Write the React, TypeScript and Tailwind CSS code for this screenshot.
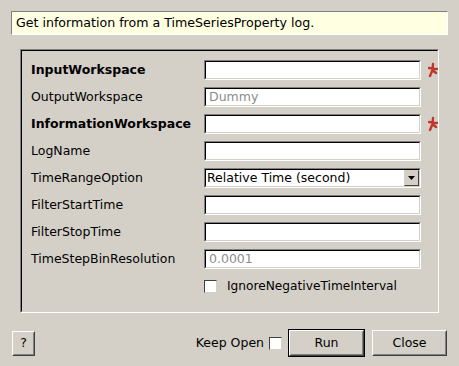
import React from 'react';

const font = "font-['DejaVu_Sans',sans-serif]";

const Sunken: React.FC<{ className?: string; children?: React.ReactNode }> = ({ className = '', children }) => (
    <div className={`shrink-0 border border-t-[#808080] border-l-[#808080] border-b-white border-r-white ${className}`}>
        <div className="h-full border border-t-black border-l-black border-b-[#d4d0c8] border-r-[#d4d0c8] bg-white flex items-center">
            {children}
        </div>
    </div>
);

const Asterisk = () => (
    <svg width="10" height="16" viewBox="0 0 10 16" className="ml-[7px] shrink-0">
        <path d="M1 6 L9 7 M5 2 L4.5 8 L2 14 M4.5 8 L8 11" stroke="#c0362c" strokeWidth="2.4" strokeLinecap="round" fill="none" />
    </svg>
);

const Button: React.FC<{ label: string; className?: string }> = ({ label, className = '' }) => (
    <div className={`border border-t-white border-l-white border-b-[#404040] border-r-[#404040] bg-[#d4d0c8] ${className}`}>
        <div className="h-full border border-t-[#d4d0c8] border-l-[#d4d0c8] border-b-[#808080] border-r-[#808080] flex items-center justify-center text-[12.5px] text-black">
            {label}
        </div>
    </div>
);

const Check = () => <div className="shrink-0 w-[13px] h-[13px] bg-white border border-t-[#404040] border-l-[#404040] border-b-[#d4d0c8] border-r-[#d4d0c8]" />;

type Row = { label: string; bold?: boolean; value?: string; required?: boolean; select?: boolean };

const rows: Row[] = [
    { label: 'InputWorkspace', bold: true, required: true },
    { label: 'OutputWorkspace', value: 'Dummy' },
    { label: 'InformationWorkspace', bold: true, required: true },
    { label: 'LogName' },
    { label: 'TimeRangeOption', select: true },
    { label: 'FilterStartTime' },
    { label: 'FilterStopTime' },
    { label: 'TimeStepBinResolution', value: '0.0001' },
];

export default function App() {
    return (
        <div className={`w-[459px] h-[366px] bg-[#d4d0c8] ${font} text-black pt-[11px] px-[11px] flex flex-col`}>
            <div className="h-[24px] bg-[#ffffe1] border border-t-[#808080] border-l-[#808080] border-b-white border-r-white pl-[4px] flex items-center text-[12.6px]">
                Get information from a TimeSeriesProperty log.
            </div>
            <div className="mt-[14px] ml-[9px] w-[419px] h-[264px] border border-t-[#808080] border-l-[#808080] border-b-white border-r-white">
                <div className="h-full border border-t-black border-l-black border-b-transparent border-r-transparent pt-[9px] pl-[9px] flex flex-col gap-[7px]">
                    {rows.map(r => (
                        <div key={r.label} className="flex items-center h-[20px]">
                            <div className={`w-[173px] shrink-0 text-[12.5px] ${r.bold ? 'font-bold' : ''} whitespace-nowrap`}>{r.label}</div>
                            {r.select ? (
                                <div className="shrink-0 w-[217px] h-[20px] border border-t-[#808080] border-l-[#808080] border-b-white border-r-white">
                                    <div className="h-full border border-t-black border-l-black border-b-[#d4d0c8] border-r-[#d4d0c8] bg-white flex items-center justify-between">
                                        <span className="text-[12.5px] pl-[1px]">Relative Time (second)</span>
                                        <div className="w-[15px] h-full border border-t-[#d4d0c8] border-l-[#d4d0c8] border-b-[#404040] border-r-[#404040] bg-[#d4d0c8] flex items-center justify-center">
                                            <svg width="7" height="4" viewBox="0 0 7 4"><path d="M0 0 H7 L3.5 4 Z" fill="black" /></svg>
                                        </div>
                                    </div>
                                </div>
                            ) : (
                                <Sunken className="w-[217px] h-[20px]">
                                    {r.value && <span className="text-[12.5px] text-[#8c8c8c] pl-[3px]">{r.value}</span>}
                                </Sunken>
                            )}
                            {r.required && <Asterisk />}
                        </div>
                    ))}
                    <div className="flex items-center h-[16px] mt-[2px] pl-[173px] gap-[10px]">
                        <Check />
                        <span className="text-[12.2px]">IgnoreNegativeTimeInterval</span>
                    </div>
                </div>
            </div>
            <div className="mt-[16px] flex items-center">
                <Button label="?" className="w-[23px] h-[25px] ml-[1px]" />
                <div className="flex-1" />
                <span className="text-[12.5px] mr-[5px]">Keep Open</span>
                <Check />
                <div className="ml-[6px] w-[77px] h-[28px] border border-black">
                    <Button label="Run" className="h-full" />
                </div>
                <Button label="Close" className="ml-[7px] w-[75px] h-[26px] mr-[1px]" />
            </div>
        </div>
    );
}
